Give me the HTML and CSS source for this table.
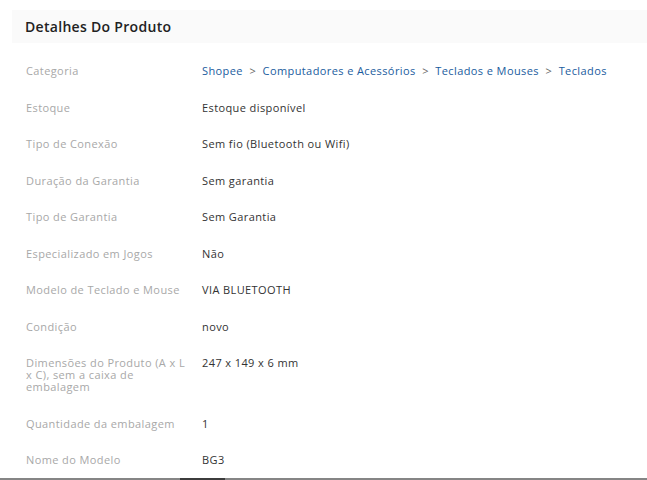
FILE: index.html
```html
<!DOCTYPE html>
<html lang="pt-BR">
<head>
<meta charset="utf-8">
<title>Detalhes Do Produto</title>
<link rel="stylesheet" href="styles.css">
</head>
<body>
<section class="details">
  <h2 class="details__title">Detalhes Do Produto</h2>
  <div class="details__list">
    <div class="row">
      <div class="row__label">Categoria</div>
      <div class="row__value crumbs">
        <a class="crumb">Shopee</a><span class="sep">&gt;</span><a class="crumb">Computadores e Acessórios</a><span class="sep">&gt;</span><a class="crumb">Teclados e Mouses</a><span class="sep">&gt;</span><a class="crumb">Teclados</a>
      </div>
    </div>
    <div class="row"><div class="row__label">Estoque</div><div class="row__value">Estoque disponível</div></div>
    <div class="row"><div class="row__label">Tipo de Conexão</div><div class="row__value">Sem fio (Bluetooth ou Wifi)</div></div>
    <div class="row"><div class="row__label">Duração da Garantia</div><div class="row__value">Sem garantia</div></div>
    <div class="row"><div class="row__label">Tipo de Garantia</div><div class="row__value">Sem Garantia</div></div>
    <div class="row"><div class="row__label">Especializado em Jogos</div><div class="row__value">Não</div></div>
    <div class="row"><div class="row__label">Modelo de Teclado e Mouse</div><div class="row__value">VIA BLUETOOTH</div></div>
    <div class="row"><div class="row__label">Condição</div><div class="row__value">novo</div></div>
    <div class="row"><div class="row__label">Dimensões do Produto (A x L x C), sem a caixa de embalagem</div><div class="row__value">247 x 149 x 6 mm</div></div>
    <div class="row"><div class="row__label">Quantidade da embalagem</div><div class="row__value">1</div></div>
    <div class="row"><div class="row__label">Nome do Modelo</div><div class="row__value">BG3</div></div>
  </div>
</section>
<div class="scrollbar"><div class="scrollbar__thumb"></div></div>
</body>
</html>
```
FILE: styles.css
```css
html, body {
  margin: 0;
  padding: 0;
  background: #fff;
}
body {
  font-family: "Open Sans", "Liberation Sans", Arial, sans-serif;
  color: #333;
}
.details {
  padding: 10px 0 0 12px;
}
.details__title {
  margin: 0;
  height: 33px;
  line-height: 33px;
  padding-left: 13px;
  background: #fafafa;
  font-size: 14px;
  font-weight: 600;
  letter-spacing: 0.3px;
  color: #222;
}
.details__list {
  padding: 22px 0 0 14px;
}
.row {
  display: flex;
  font-size: 11px;
  line-height: 12px;
  letter-spacing: 0.4px;
  margin-bottom: 24.5px;
}
.row__label {
  width: 161px;
  flex: none;
  color: #a8a8a8;
  margin-right: 15px;
}
.row__value {
  color: #333;
}
.crumbs {
  display: flex;
  align-items: center;
}
.crumb {
  color: #1a5c9e;
}
.sep {
  color: #666;
  margin: 0 6.5px;
}
.scrollbar {
  position: fixed;
  left: 0;
  right: 0;
  bottom: 0;
  height: 2px;
  background: #858585;
}
.scrollbar__thumb {
  margin-left: 180px;
  width: 45px;
  height: 2px;
  background: #3c3c3c;
}
```
